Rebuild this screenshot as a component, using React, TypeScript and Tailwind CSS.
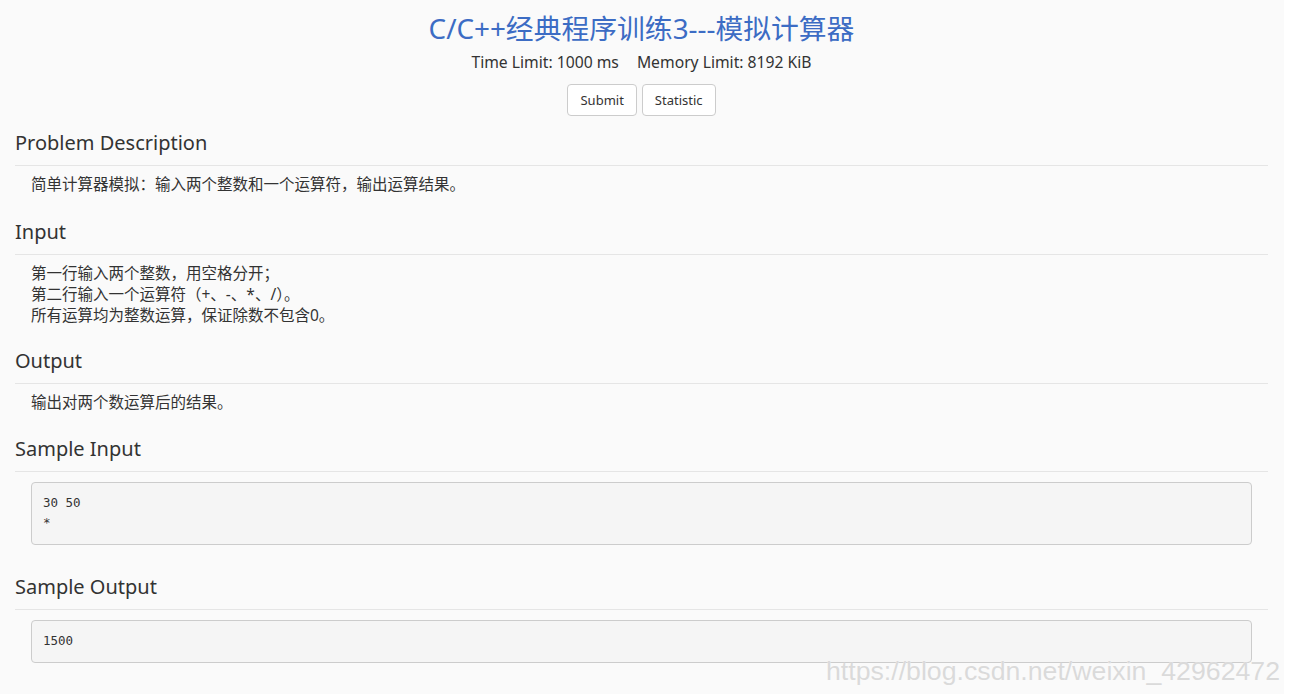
import React from "react";

const sans = "font-['Segoe_UI','Noto_Sans','Noto_Sans_CJK_SC',sans-serif]";

function Section({ title, children }: { title: string; children: React.ReactNode }) {
  return (
    <section>
      <h2 className="border-b border-[#e5e5e5] pb-[9px] text-[20px] leading-[26px] text-[#333]">{title}</h2>
      {children}
    </section>
  );
}

function Text({ lines }: { lines: string[] }) {
  return (
    <div className="mt-[8px] px-4 text-[15.5px] leading-[21px] text-[#333]">
      {lines.map((l) => (
        <div key={l}>{l}</div>
      ))}
    </div>
  );
}

function Sample({ lines }: { lines: string[] }) {
  return (
    <pre className="mx-4 mt-[10px] rounded border border-[#ccc] bg-[#f5f5f5] px-[11px] py-[10.5px] font-['DejaVu_Sans_Mono','Liberation_Mono',monospace] text-[12.5px] leading-[20px] text-[#333]">
      {lines.join("\n")}
    </pre>
  );
}

export default function App() {
  return (
    <div className={`relative h-[694px] overflow-hidden bg-white ${sans}`}>
      <div className="h-full w-[1284px] bg-[#fafafa] px-[15px] pt-[10px]">
        <div className="w-[1253px]">
          <h1 className="text-center text-[27.8px] leading-[36px] text-[#3c6cc4]">C/C++经典程序训练3---模拟计算器</h1>
          <div className="mt-[5.5px] flex justify-center gap-[18px] text-[15.7px] leading-[21px] text-[#333]">
            <span>Time Limit: 1000 ms</span>
            <span>Memory Limit: 8192 KiB</span>
          </div>
          <div className="mt-[11.5px] flex justify-center gap-[5px]">
            <button className="h-[32px] rounded border border-[#ccc] bg-white px-[12px] pt-[2px] text-[13px] text-[#333]">Submit</button>
            <button className="h-[32px] rounded border border-[#ccc] bg-white px-[12px] pt-[2px] text-[13px] text-[#333]">Statistic</button>
          </div>
          <div className="mt-[14px] flex flex-col">
            <Section title="Problem Description">
              <Text lines={["简单计算器模拟：输入两个整数和一个运算符，输出运算结果。"]} />
            </Section>
            <div className="h-[23.5px]" />
            <Section title="Input">
              <Text lines={["第一行输入两个整数，用空格分开；", "第二行输入一个运算符（+、-、*、/）。", "所有运算均为整数运算，保证除数不包含0。"]} />
            </Section>
            <div className="h-[22.5px]" />
            <Section title="Output">
              <Text lines={["输出对两个数运算后的结果。"]} />
            </Section>
            <div className="h-[22.5px]" />
            <Section title="Sample Input">
              <Sample lines={["30 50", "*"]} />
            </Section>
            <div className="h-[29px]" />
            <Section title="Sample Output">
              <Sample lines={["1500"]} />
            </Section>
          </div>
        </div>
      </div>
      <div className="absolute left-[826px] top-[654px] font-['Liberation_Sans',Arial,sans-serif] text-[26.7px] leading-[34px] text-[#dadada] [text-shadow:0_0_1px_#fff]">
        https://blog.csdn.net/weixin_42962472
      </div>
    </div>
  );
}
